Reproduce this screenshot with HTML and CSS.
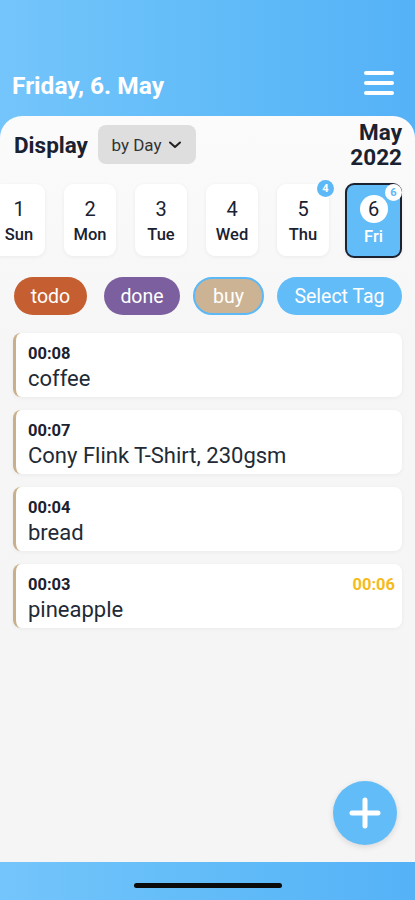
FILE: index.html
```html
<!DOCTYPE html>
<html>
<head>
<meta charset="utf-8">
<link rel="stylesheet" href="styles.css">
</head>
<body>
<div class="app">
  <header class="header">
    <h1 class="title">Friday, 6. May</h1>
    <div class="menu"><span></span><span></span><span></span></div>
  </header>
  <main class="panel">
    <div class="toolbar">
      <div class="display">
        <span class="display-label">Display</span>
        <span class="select">by Day
          <svg width="14" height="10" viewBox="0 0 14 10"><path d="M2 2.5 L7 7 L12 2.5" fill="none" stroke="#222" stroke-width="2" stroke-linecap="round" stroke-linejoin="round"/></svg>
        </span>
      </div>
      <div class="month">May<br>2022</div>
    </div>
    <div class="days">
      <div class="day"><span class="num">1</span><span class="wd">Sun</span></div>
      <div class="day"><span class="num">2</span><span class="wd">Mon</span></div>
      <div class="day"><span class="num">3</span><span class="wd">Tue</span></div>
      <div class="day"><span class="num">4</span><span class="wd">Wed</span></div>
      <div class="day"><span class="num">5</span><span class="wd">Thu</span><span class="badge">4</span></div>
      <div class="day active"><span class="num">6</span><span class="wd">Fri</span><span class="badge">6</span></div>
    </div>
    <div class="tags">
      <span class="tag todo">todo</span>
      <span class="tag done">done</span>
      <span class="tag buy">buy</span>
      <span class="tag select-tag">Select Tag</span>
    </div>
    <div class="list">
      <div class="card"><div class="row"><span class="time">00:08</span></div><div class="name">coffee</div></div>
      <div class="card"><div class="row"><span class="time">00:07</span></div><div class="name">Cony Flink T-Shirt, 230gsm</div></div>
      <div class="card"><div class="row"><span class="time">00:04</span></div><div class="name">bread</div></div>
      <div class="card"><div class="row"><span class="time">00:03</span><span class="due">00:06</span></div><div class="name">pineapple</div></div>
    </div>
    <button class="fab">
      <svg width="34" height="34" viewBox="0 0 34 34"><path d="M17 4 V30 M4 17 H30" stroke="#fff" stroke-width="5" stroke-linecap="round"/></svg>
    </button>
  </main>
  <footer class="bottom"><span class="home"></span></footer>
</div>
</body>
</html>
```
FILE: styles.css
```css
* { box-sizing: border-box; }
html, body { margin: 0; padding: 0; }
body {
  font-family: Roboto, "Liberation Sans", sans-serif;
  color: #1a2130;
}
.app {
  width: 415px;
  height: 900px;
  display: flex;
  flex-direction: column;
  background: linear-gradient(90deg, #74c5fb 0%, #62bcf8 50%, #55b2f7 100%);
  overflow: hidden;
}
.header {
  height: 116px;
  flex: none;
  display: flex;
  align-items: center;
  justify-content: space-between;
  padding: 54px 21px 0 12px;
}
.title {
  margin: 0;
  color: #fff;
  font-size: 24.5px;
  font-weight: 700;
}
.menu {
  display: flex;
  flex-direction: column;
  gap: 6px;
  width: 30px;
  margin-top: -4px;
}
.menu span {
  display: block;
  height: 4px;
  background: #fff;
  border-radius: 2px;
}
.panel {
  flex: 1;
  position: relative;
  background: linear-gradient(180deg, #fbfbfb 0%, #f6f6f6 30%, #f5f5f5 100%);
  border-radius: 22px 22px 0 0;
  padding: 0 13px 0 13px;
}
.toolbar {
  display: flex;
  justify-content: space-between;
  align-items: flex-start;
  padding: 9px 0 0 1px;
  height: 66px;
}
.display {
  display: flex;
  align-items: center;
  gap: 10px;
}
.display-label {
  font-size: 22.5px;
  font-weight: 700;
}
.select {
  display: flex;
  align-items: center;
  justify-content: center;
  gap: 7px;
  width: 98px;
  height: 39px;
  background: #dedede;
  border-radius: 8px;
  font-size: 17px;
  color: #333;
}
.month {
  font-size: 22.5px;
  font-weight: 700;
  text-align: right;
  line-height: 25px;
  margin-top: -5px;
}
.days {
  display: flex;
  align-items: center;
  gap: 19px;
  margin-left: -20px;
  height: 76px;
}
.day {
  position: relative;
  width: 52px;
  height: 72px;
  background: #fff;
  border-radius: 9px;
  display: flex;
  flex-direction: column;
  align-items: center;
  justify-content: center;
  gap: 4px;
  padding-top: 2px;
  box-shadow: 0 1px 4px rgba(0,0,0,0.06);
}
.num {
  font-size: 20px;
  line-height: 24px;
}
.wd {
  font-size: 16.5px;
  font-weight: 500;
  line-height: 20px;
}
.badge {
  position: absolute;
  top: -4px;
  right: -5px;
  width: 17px;
  height: 17px;
  border-radius: 50%;
  background: #5cb8f6;
  color: #fff;
  font-size: 11px;
  font-weight: 700;
  display: flex;
  align-items: center;
  justify-content: center;
}
.day.active {
  width: 57px;
  height: 75px;
  background: #62bcf8;
  border: 2px solid #1b2230;
  margin-left: -3px;
}
.day.active .num {
  width: 28px;
  height: 28px;
  border-radius: 50%;
  background: #fff;
  display: flex;
  align-items: center;
  justify-content: center;
}
.day.active .wd { color: #fff; }
.day.active .badge {
  background: #fff;
  color: #5cb8f6;
  top: -1px;
  right: -2px;
}
.tags {
  display: flex;
  justify-content: space-between;
  margin-top: 19px;
  padding-left: 1px;
}
.tag {
  height: 38px;
  border-radius: 19px;
  display: flex;
  align-items: center;
  justify-content: center;
  color: #fff;
  font-size: 19.5px;
}
.todo { background: #c55e30; width: 73px; }
.done { background: #7c5f9e; width: 76px; margin-left: 4px; }
.buy { background: #cbb394; width: 71px; border: 2px solid #5cb8f6; }
.select-tag { background: #62bcf8; width: 125px; }
.list {
  display: flex;
  flex-direction: column;
  gap: 13px;
  margin-top: 18px;
}
.card {
  height: 64px;
  background: #fff;
  border-radius: 8px;
  border-left: 3px solid #c9b08c;
  padding: 9px 7px 0 12px;
  box-shadow: 0 1px 4px rgba(0,0,0,0.05);
}
.row {
  display: flex;
  justify-content: space-between;
  height: 22px;
  align-items: center;
}
.time {
  font-size: 16.5px;
  font-weight: 700;
}
.due {
  font-size: 16.5px;
  font-weight: 700;
  color: #f5bb1d;
}
.name {
  font-size: 22px;
  line-height: 30px;
  color: #222a36;
}
.fab {
  position: absolute;
  right: 18px;
  bottom: 17px;
  width: 64px;
  height: 64px;
  border-radius: 50%;
  border: none;
  background: #62bcf8;
  display: flex;
  align-items: center;
  justify-content: center;
  padding: 0;
  box-shadow: 0 2px 6px rgba(0,0,0,0.12);
}
.bottom {
  height: 38px;
  flex: none;
  display: flex;
  align-items: center;
  justify-content: center;
  padding-top: 9px;
}
.home {
  width: 148px;
  height: 5px;
  border-radius: 3px;
  background: #0b0b0b;
}
```
